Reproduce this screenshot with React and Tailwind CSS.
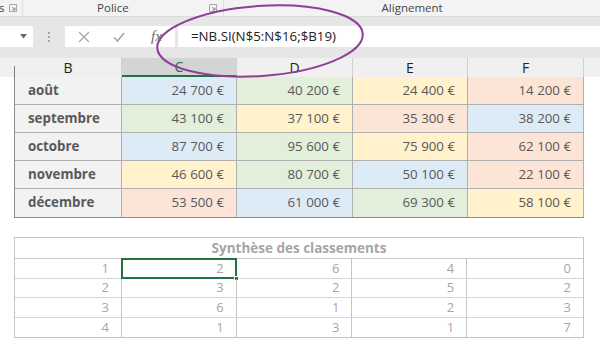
import React from "react";

const BLUE = "bg-[#ddebf7]";
const GREEN = "bg-[#e2efda]";
const YEL = "bg-[#fff2cc]";
const ORA = "bg-[#fce4d6]";

const W = ["w-[107px]", "w-[115px]", "w-[116px]", "w-[115px]", "w-[116px]"];

const rows = [
  ["août", [["24 700 €", BLUE], ["40 200 €", GREEN], ["24 400 €", YEL], ["14 200 €", ORA]]],
  ["septembre", [["43 100 €", GREEN], ["37 100 €", YEL], ["35 300 €", ORA], ["38 200 €", BLUE]]],
  ["octobre", [["87 700 €", BLUE], ["95 600 €", GREEN], ["75 900 €", YEL], ["62 100 €", ORA]]],
  ["novembre", [["46 600 €", YEL], ["80 700 €", GREEN], ["50 100 €", BLUE], ["22 100 €", ORA]]],
  ["décembre", [["53 500 €", ORA], ["61 000 €", BLUE], ["69 300 €", GREEN], ["58 100 €", YEL]]],
];

const synth = [
  ["1", "2", "6", "4", "0"],
  ["2", "3", "2", "5", "2"],
  ["3", "6", "1", "2", "3"],
  ["4", "1", "3", "1", "7"],
];

function Launcher() {
  return (
    <svg width="8" height="8" viewBox="0 0 8 8" className="shrink-0">
      <path d="M0.5 0.5H7.5V7.5H0.5Z" fill="none" stroke="#a8a8a8" strokeWidth="1" />
      <path d="M3 3L6 6M6 3.5V6H3.5" fill="none" stroke="#8c8c8c" strokeWidth="1" />
    </svg>
  );
}

export default function App() {
  const font = { fontFamily: '"Open Sans", "Noto Sans", sans-serif' };
  return (
    <div className="relative w-[600px] h-[352px] overflow-hidden bg-white" style={font}>
      {/* Ribbon group labels */}
      <div className="flex h-[17px] bg-[#f3f3f3] border-b border-[#dcdcdc] text-[11.5px] text-[#444] leading-[16px]">
        <div className="w-[23px] flex items-center justify-between pr-[5px] border-r border-[#dedede]">
          <span className="-ml-[1px]">s</span>
          <Launcher />
        </div>
        <div className="w-[207px] flex items-center pr-[6px] border-r border-[#dedede]">
          <span className="flex-1 text-center pr-[6px]">Police</span>
          <Launcher />
        </div>
        <div className="w-[386px] flex items-center justify-center">
          <span>Alignement</span>
        </div>
      </div>

      {/* Formula band */}
      <div className="h-[41px] bg-[#e6e6e6] pt-[9px]">
        <div className="flex h-[21px] items-stretch">
          <div className="w-[33px] bg-white flex items-center justify-end pr-[6px]">
            <svg width="7" height="5" viewBox="0 0 7 5">
              <path d="M0 0H7L3.5 4.5Z" fill="#666" />
            </svg>
          </div>
          <div className="w-[32px] flex flex-col items-center justify-center gap-[2px]">
            <div className="w-[2px] h-[2px] bg-[#a6a6a6]" />
            <div className="w-[2px] h-[2px] bg-[#a6a6a6]" />
            <div className="w-[2px] h-[2px] bg-[#a6a6a6]" />
          </div>
          <div className="w-[110px] bg-white flex items-center">
            <svg width="12" height="12" viewBox="0 0 12 12" className="ml-[13px]">
              <path d="M1 1L11 11M11 1L1 11" stroke="#a6a6a6" strokeWidth="1.2" fill="none" />
            </svg>
            <svg width="12" height="12" viewBox="0 0 12 12" className="ml-[23px]">
              <path d="M1 6.5L4.5 10L11 2" stroke="#a6a6a6" strokeWidth="1.6" fill="none" />
            </svg>
            <span
              className="ml-[26px] italic text-[15px] text-[#6a6a6a] leading-none"
              style={{ fontFamily: '"Liberation Serif", serif' }}
            >
              fx
            </span>
          </div>
          <div className="w-[3px]" />
          <div className="flex-1 bg-white flex items-center pl-[13px] text-[13.3px] text-[#222]">
            =NB.SI(N$5:N$16;$B19)
          </div>
        </div>
      </div>

      {/* Column headers */}
      <div className="flex h-[19px] bg-[#f0f0f0] text-[14px] leading-[18px] text-[#222]">
        <div className="w-[15px] border-r border-[#7f7f7f] mt-[8px]" />
        {["B", "C", "D", "E", "F"].map((c, i) => (
          <div
            key={c}
            className={
              W[i] +
              " border-r border-[#d0d0d0] flex items-center justify-center " +
              (c === "C" ? "bg-[#d4d4d4] text-[#217346] border-b-2 border-b-[#217346]" : "")
            }
          >
            {c}
          </div>
        ))}
        <div className="flex-1" />
      </div>

      {/* Main table */}
      <div className="ml-[14px] w-[570px] border-l border-b border-[#8c8c8c] text-[13.3px] text-[#595959]">
        {rows.map(([label, vals], r) => (
          <div
            key={label}
            className={"flex h-[28px] " + (r < rows.length - 1 ? "border-b border-[#b0b0b0]" : "")}
          >
            <div className={W[0] + " bg-[#f2f2f2] border-r border-[#b0b0b0] flex items-center pl-[13px] font-bold"}>
              {label}
            </div>
            {vals.map(([v, bg], i) => (
              <div
                key={i}
                className={W[i + 1] + " " + bg + " border-r border-[#b0b0b0] flex items-center justify-end pr-[12px]"}
              >
                {v}
              </div>
            ))}
          </div>
        ))}
      </div>

      {/* Synthesis table */}
      <div className="mt-[19px] ml-[14px] w-[570px] border border-[#c4c4c4] text-[13px] text-[#a6a6a6]">
        <div className="h-[21px] border-b border-[#c8c8c8] flex items-center justify-center font-bold text-[13.5px]">
          Synthèse des classements
        </div>
        {synth.map((row, r) => (
          <div
            key={r}
            className={"flex h-[19.5px] " + (r < synth.length - 1 ? "border-b border-[#d6d6d6]" : "")}
          >
            {row.map((v, i) => (
              <div
                key={i}
                className={
                  W[i] +
                  " relative flex items-center justify-end pr-[12px] leading-none " +
                  (i < 4 ? "border-r border-[#c4c4c4]" : "")
                }
              >
                {v}
                {r === 0 && i === 1 && (
                  <>
                    <div className="absolute -left-[1px] -top-[1px] -right-[1px] -bottom-[1px] border-2 border-[#217346]" />
                    <div className="absolute -right-[3px] -bottom-[3px] w-[5px] h-[5px] bg-[#217346] border border-white" />
                  </>
                )}
              </div>
            ))}
          </div>
        ))}
      </div>

      {/* Highlight ellipse */}
      <svg className="absolute left-0 top-0 pointer-events-none" width="600" height="352">
        <ellipse
          cx="260"
          cy="41"
          rx="103"
          ry="35"
          transform="rotate(-4 260 41)"
          fill="none"
          stroke="#8e3f98"
          strokeWidth="2"
        />
      </svg>
    </div>
  );
}
